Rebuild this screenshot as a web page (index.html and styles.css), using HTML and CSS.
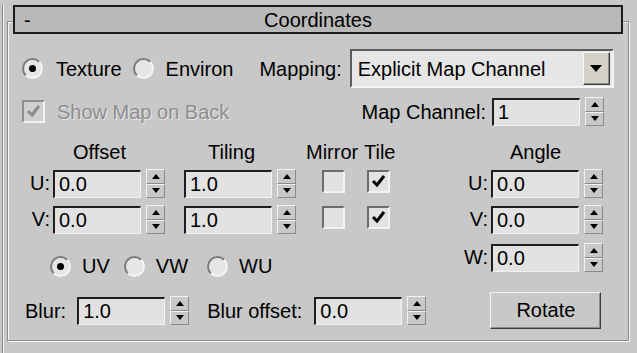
FILE: index.html
```html
<!DOCTYPE html>
<html lang="en">
<head>
    <meta charset="UTF-8">
    <title>Coordinates</title>
    <link rel="stylesheet" href="styles.css">
</head>
<body>
    <div class="panel">
        <div class="title">
            <span class="toggle">-</span>
            <span>Coordinates</span>
        </div>
        <div class="frame">
            <div class="row row-top">
                <span class="radio on first"></span>
                <span class="lbl gap13">Texture</span>
                <span class="radio gap11"></span>
                <span class="lbl gap12">Environ</span>
                <span class="lbl gap26">Mapping:</span>
                <div class="select">
                    <span>Explicit Map Channel</span>
                    <span class="drop"><i class="tri-down big"></i></span>
                </div>
            </div>

            <div class="row row-back">
                <span class="check disabled first">
                    <svg width="18" height="18" viewBox="0 0 18 18"><path d="M3 8 L7 12 L14 3" fill="none" stroke="#8a8a8a" stroke-width="3"/></svg>
                </span>
                <span class="lbl gap12 grey">Show Map on Back</span>
                <span class="lbl push">Map Channel:</span>
                <div class="spin">
                    <span class="field">1</span>
                    <span class="arrows"><span><i class="tri-up"></i></span><span><i class="tri-down"></i></span></span>
                </div>
            </div>

            <div class="coords">
                <span class="head c-offset">Offset</span>
                <span class="head c-tiling">Tiling</span>
                <span class="head c-mirror">Mirror</span>
                <span class="head c-tile">Tile</span>
                <span class="head c-angle">Angle</span>

                <span class="axis r2 c1">U:</span>
                <div class="spin r2 c2">
                    <span class="field">0.0</span>
                    <span class="arrows"><span><i class="tri-up"></i></span><span><i class="tri-down"></i></span></span>
                </div>
                <div class="spin r2 c3">
                    <span class="field">1.0</span>
                    <span class="arrows"><span><i class="tri-up"></i></span><span><i class="tri-down"></i></span></span>
                </div>
                <span class="check r2 c4"></span>
                <span class="check r2 c5">
                    <svg width="18" height="18" viewBox="0 0 18 18"><path d="M3 8 L7 12 L14 3" fill="none" stroke="#000" stroke-width="3"/></svg>
                </span>
                <span class="axis r2 c7">U:</span>
                <div class="spin r2 c8">
                    <span class="field">0.0</span>
                    <span class="arrows"><span><i class="tri-up"></i></span><span><i class="tri-down"></i></span></span>
                </div>

                <span class="axis r3 c1">V:</span>
                <div class="spin r3 c2">
                    <span class="field">0.0</span>
                    <span class="arrows"><span><i class="tri-up"></i></span><span><i class="tri-down"></i></span></span>
                </div>
                <div class="spin r3 c3">
                    <span class="field">1.0</span>
                    <span class="arrows"><span><i class="tri-up"></i></span><span><i class="tri-down"></i></span></span>
                </div>
                <span class="check r3 c4"></span>
                <span class="check r3 c5">
                    <svg width="18" height="18" viewBox="0 0 18 18"><path d="M3 8 L7 12 L14 3" fill="none" stroke="#000" stroke-width="3"/></svg>
                </span>
                <span class="axis r3 c7">V:</span>
                <div class="spin r3 c8">
                    <span class="field">0.0</span>
                    <span class="arrows"><span><i class="tri-up"></i></span><span><i class="tri-down"></i></span></span>
                </div>

                <div class="planes">
                    <span class="radio on"></span>
                    <span class="lbl gap11">UV</span>
                    <span class="radio gap14"></span>
                    <span class="lbl gap11">VW</span>
                    <span class="radio gap19"></span>
                    <span class="lbl gap11">WU</span>
                </div>
                <span class="axis r4 c7">W:</span>
                <div class="spin r4 c8">
                    <span class="field">0.0</span>
                    <span class="arrows"><span><i class="tri-up"></i></span><span><i class="tri-down"></i></span></span>
                </div>
            </div>

            <div class="row row-blur">
                <span class="lbl blur">Blur:</span>
                <div class="spin gap11">
                    <span class="field">1.0</span>
                    <span class="arrows"><span><i class="tri-up"></i></span><span><i class="tri-down"></i></span></span>
                </div>
                <span class="lbl gap18">Blur offset:</span>
                <div class="spin gap12">
                    <span class="field">0.0</span>
                    <span class="arrows"><span><i class="tri-up"></i></span><span><i class="tri-down"></i></span></span>
                </div>
                <button class="btn">Rotate</button>
            </div>
        </div>
    </div>
</body>
</html>
```
FILE: styles.css
```css
body { margin: 0; background: #c8c8c8; color: #000; font: 20px "Liberation Sans", Arial, sans-serif; }

/* rollout */
.panel { margin-left: 2px; height: 353px; box-sizing: border-box; border-left: 1px solid #8c8c8c; box-shadow: inset 1px 0 0 #f2f2f2; }
.title { position: relative; z-index: 1; margin: 5px 0 0 10px; width: 610px; height: 29px; box-sizing: border-box; border: 2px solid #1c1c1c; background: #b9b9b9; display: grid; grid-template-columns: 1fr auto 1fr; align-items: center; line-height: 24px; }
.toggle { padding-left: 9px; }
.frame { margin: -13px 0 0 4px; width: 622px; height: 320px; box-sizing: border-box; border: 1px solid #8c8c8c; box-shadow: inset 1px 1px 0 #f4f4f4, 1px 1px 0 #f4f4f4; padding-top: 27px; }

.row { display: flex; align-items: center; }
.lbl { white-space: nowrap; line-height: 24px; }
.grey { color: #8e8e8e; text-shadow: 1px 1px 0 #e6e6e6; }
.first { margin-left: 14px; }
.gap11 { margin-left: 11px; }
.gap12 { margin-left: 12px; }
.gap13 { margin-left: 13px; }
.gap14 { margin-left: 14px; }
.gap18 { margin-left: 18px; }
.gap19 { margin-left: 19px; }
.gap26 { margin-left: 26px; }
.push { margin-left: auto; margin-right: 6px; }

.row-top { height: 39px; }
.row-back { height: 29px; margin-top: 9px; padding-right: 24px; }
.row-blur { height: 37px; margin-top: 20px; }
.blur { margin-left: 17px; }

/* controls */
.radio { position: relative; width: 21px; height: 21px; flex: none; box-sizing: border-box; border-radius: 50%; border: 2px solid; border-color: #7c7c7c #f4f4f4 #f4f4f4 #7c7c7c; background: #e6e6e6; }
.radio.on::after { content: ""; position: absolute; left: 5px; top: 5px; width: 7px; height: 7px; border-radius: 50%; background: #000; }

.check { width: 23px; height: 23px; flex: none; box-sizing: border-box; border: 2px solid; border-color: #6c6c6c #f2f2f2 #f2f2f2 #6c6c6c; background: #e2e2e2; display: flex; align-items: center; justify-content: center; }
.check svg { display: block; margin: 1px 0 0 1px; }
.check.disabled { border-color: #8e8e8e #f2f2f2 #f2f2f2 #8e8e8e; background: #d0d0d0; }

.select { margin-left: 8px; width: 264px; height: 39px; box-sizing: border-box; border: 2px solid; border-color: #5c5c5c #f4f4f4 #f4f4f4 #5c5c5c; background: #e6e6e6; display: flex; align-items: center; padding-left: 6px; line-height: 24px; }
.drop { margin-left: auto; margin-right: 2px; width: 27px; height: 33px; box-sizing: border-box; border: 1px solid; border-color: #f6f6f6 #404040 #404040 #f6f6f6; box-shadow: inset -1px -1px 0 #8c8c8c; background: #d4d0c8; display: flex; align-items: center; justify-content: center; }

.spin { display: flex; gap: 5px; align-items: center; }
.field { width: 88px; height: 28px; box-sizing: border-box; border-style: solid; border-width: 2px 1px 1px 2px; border-color: #1e1e1e #f2f2f2 #f2f2f2 #1e1e1e; background: #e2e2e2; padding-left: 4px; line-height: 25px; }
.arrows { width: 19px; height: 29px; display: flex; flex-direction: column; }
.arrows span { flex: 1; box-sizing: border-box; border: 1px solid; border-color: #f2f2f2 #8a8a8a #8a8a8a #f2f2f2; background: #c8c8c8; display: flex; align-items: center; justify-content: center; }

.tri-up, .tri-down { width: 0; height: 0; border-left: 4px solid transparent; border-right: 4px solid transparent; }
.tri-up { border-bottom: 5px solid #000; }
.tri-down { border-top: 5px solid #000; }
.tri-down.big { border-left-width: 6px; border-right-width: 6px; border-top-width: 7px; }

.btn { margin-left: 64px; width: 111px; height: 37px; padding: 0; font: inherit; color: #000; background: #c8c8c8; border: 1px solid; border-color: #f2f2f2 #3c3c3c #3c3c3c #f2f2f2; box-shadow: inset -1px -1px 0 #8c8c8c; }

/* offset / tiling / angle grid */
.coords { margin-top: 14px; display: grid; grid-template-columns: 45px 112px 131px 62px 38px 64px 31px 113px; grid-template-rows: 29px 36px 38px 29px; align-items: start; }
.head { grid-row: 1; line-height: 24px; white-space: nowrap; }
.c-offset { grid-column: 2; margin-left: 20px; }
.c-tiling { grid-column: 3; margin-left: 43px; }
.c-mirror { grid-column: 4; margin-left: 10px; }
.c-tile { grid-column: 5; margin-left: 6px; }
.c-angle { grid-column: 7 / span 2; margin-left: 50px; }
.axis { justify-self: end; padding-right: 3px; line-height: 28px; }
.r2 { grid-row: 2; }
.r3 { grid-row: 3; }
.r4 { grid-row: 4; }
.c1 { grid-column: 1; }
.c2 { grid-column: 2; }
.c3 { grid-column: 3; justify-self: end; }
.c4 { grid-column: 4; margin: 1px 0 0 26px; }
.c5 { grid-column: 5; margin: 1px 0 0 9px; }
.c7 { grid-column: 7; }
.c8 { grid-column: 8; }
.planes { grid-row: 4; grid-column: 1 / span 5; display: flex; align-items: center; margin: 11px 0 0 42px; line-height: 24px; }
```
